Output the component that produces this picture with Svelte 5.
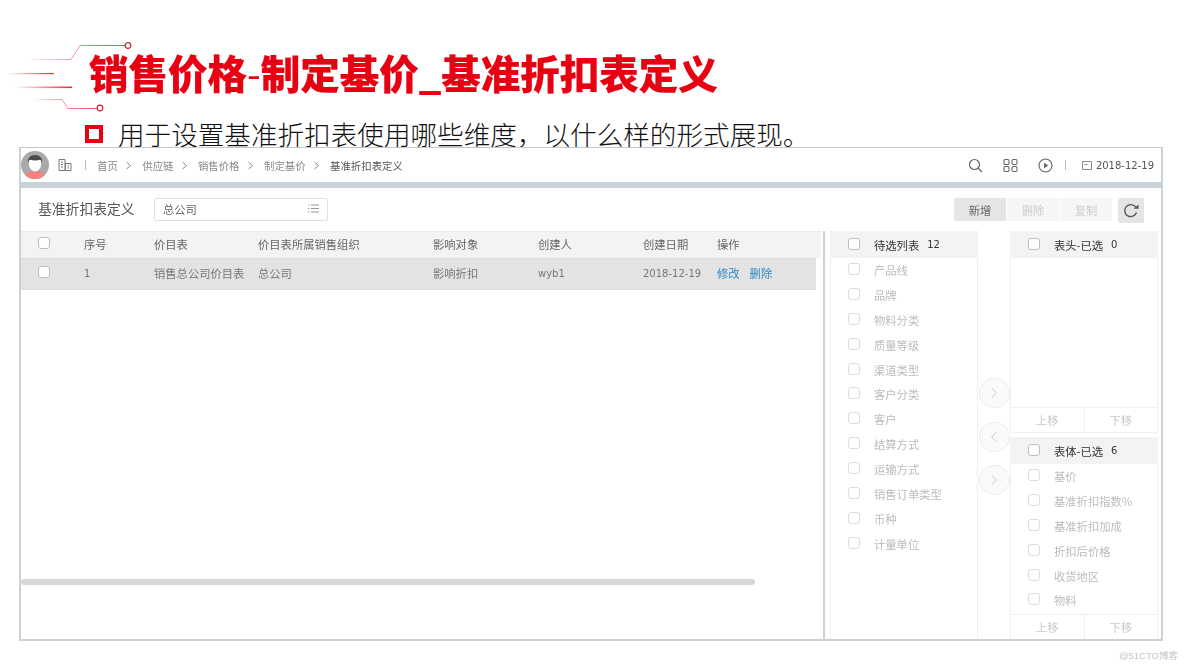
<script>
  const crumbs = ['首页', '供应链', '销售价格', '制定基价', '基准折扣表定义'];
  const candidates = ['产品线', '品牌', '物料分类', '质量等级', '渠道类型', '客户分类', '客户', '结算方式', '运输方式', '销售订单类型', '币种', '计量单位'];
  const bodyItems = ['基价', '基准折扣指数%', '基准折扣加成', '折扣后价格', '收货地区', '物料'];
  const cols = ['序号', '价目表', '价目表所属销售组织', '影响对象', '创建人', '创建日期', '操作'];
  const subtitle = '用于设置基准折扣表使用哪些维度\uFF0C以什么样的形式展现。';
</script>

<div class="slide">
  <svg class="deco" width="140" height="80" viewBox="0 0 140 80" aria-hidden="true">
    <defs>
      <linearGradient id="fade" x1="0" x2="1" y1="0" y2="0">
        <stop offset="0" stop-color="#e60012" stop-opacity="0" />
        <stop offset="1" stop-color="#e60012" stop-opacity="0.85" />
      </linearGradient>
      <linearGradient id="fadeA" gradientUnits="userSpaceOnUse" x1="30" x2="125" y1="0" y2="0">
        <stop offset="0" stop-color="#e60012" stop-opacity="0.05" />
        <stop offset="1" stop-color="#d9364a" stop-opacity="0.9" />
      </linearGradient>
      <linearGradient id="fadeB" gradientUnits="userSpaceOnUse" x1="35" x2="97" y1="0" y2="0">
        <stop offset="0" stop-color="#e60012" stop-opacity="0.05" />
        <stop offset="1" stop-color="#d9364a" stop-opacity="0.9" />
      </linearGradient>
    </defs>
    <path d="M30 19.500H71L80 5.500H125" fill="none" stroke="url(#fadeA)" stroke-width="1" />
    <circle cx="128" cy="5.500" r="2.800" fill="#fff" stroke="#d9213a" stroke-width="1.200" />
    <rect x="8" y="33" width="46" height="1.200" fill="url(#fade)" />
    <rect x="15" y="46.500" width="57" height="1.600" fill="url(#fade)" />
    <path d="M36 59.500H62L68 68.500H97" fill="none" stroke="url(#fadeB)" stroke-width="1" />
    <circle cx="100" cy="68" r="2.800" fill="#fff" stroke="#d9213a" stroke-width="1.200" />
  </svg>

  <header class="head">
    <h1>销售价格<span class="dash">-</span>制定基价_基准折扣表定义</h1>
    <p class="sub"><i class="bullet"></i><span>{subtitle}</span></p>
  </header>

  <main class="frame">
    <div class="topbar">
      <div class="avatar">
        <svg width="28" height="28" viewBox="0 0 28 28" aria-hidden="true">
          <circle cx="14" cy="14" r="14" fill="#a9a9ab" />
          <path d="M4.500 24.500c1.500-4 5-5 9.500-5s8 1 9.500 5a14 14 0 0 1-19 0Z" fill="#f2837a" />
          <path d="M7.500 11c0-4 3-6 6.500-6s6.500 2 6.500 6c0 5.500-3 9.500-6.500 9.500S7.500 16.500 7.500 11Z" fill="#fff" />
          <path d="M7 12.500C6 7 9.500 4 14 4s8 3 7 8.500c-.5-2-1-3-2-3.700-3 .9-7 .9-10 0-1 .7-1.500 1.700-2 3.700Z" fill="#4a4a4a" />
        </svg>
      </div>
      <svg class="org" width="14" height="14" viewBox="0 0 14 14" aria-hidden="true">
        <path d="M1 1.500h6v11H1zM7.500 5.500h5.500v7H7.500zM3 4h2M3 6.500h2M3 9h2M9.500 8h1.500M9.500 10h1.500" fill="none" stroke="#777" stroke-width="1" />
      </svg>
      <span class="vsep first"></span>
      <nav class="crumbs">
        {#each crumbs as c, i}
          {#if i > 0}
            <svg class="chev" width="7" height="9" viewBox="0 0 7 9" aria-hidden="true"><path d="M1.500 1 5.500 4.500 1.500 8" fill="none" stroke="#8a8a8a" stroke-width="1" /></svg>
          {/if}
          <span class:current={i === crumbs.length - 1}>{c}</span>
        {/each}
      </nav>
      <div class="tools">
        <svg width="15" height="15" viewBox="0 0 15 15" aria-hidden="true"><circle cx="6.500" cy="6.500" r="5" fill="none" stroke="#666" stroke-width="1.200" /><path d="m10 10 4 4" stroke="#666" stroke-width="1.200" /></svg>
        <svg width="15" height="15" viewBox="0 0 15 15" aria-hidden="true"><g fill="none" stroke="#666" stroke-width="1.100"><rect x="1" y="1.500" width="5" height="5" rx="1.200" /><rect x="9" y="1.500" width="5" height="5" rx="1.200" /><rect x="1" y="8.500" width="5" height="5" rx="1.200" /><rect x="9" y="8.500" width="5" height="5" rx="1.200" /></g></svg>
        <svg width="15" height="15" viewBox="0 0 15 15" aria-hidden="true"><circle cx="7.500" cy="7.500" r="6.500" fill="none" stroke="#666" stroke-width="1.100" /><path d="M6 4.800 10.200 7.500 6 10.200Z" fill="#666" /></svg>
        <span class="vsep tool-sep"></span>
        <div class="date">
          <svg width="10" height="10" viewBox="0 0 10 10" aria-hidden="true"><path d="M.5 1.500h9v8h-9zM2.500 4.500h3" fill="none" stroke="#888" stroke-width="1" /></svg>
          <span>2018-12-19</span>
        </div>
      </div>
    </div>
    <div class="band"></div>

    <div class="content">
      <div class="toolbar">
        <span class="page-title">基准折扣表定义</span>
        <div class="select">
          <span>总公司</span>
          <svg width="11" height="9" viewBox="0 0 11 9" aria-hidden="true"><path d="M0 1h1.500M3 1h8M0 4.500h1.500M3 4.500h8M0 8h1.500M3 8h8" stroke="#999" stroke-width="1" /></svg>
        </div>
        <div class="btns">
          <button class="btn primary">新增</button>
          <button class="btn">删除</button>
          <button class="btn">复制</button>
          <button class="refresh" aria-label="刷新">
            <svg width="17" height="15" viewBox="0 0 17 15" aria-hidden="true"><path d="M13.500 9.500A6 6 0 1 1 12.600 4" fill="none" stroke="#555" stroke-width="1.400" /><path d="M10.500 5.800h5V1.500Z" fill="#555" /></svg>
          </button>
        </div>
      </div>

      <div class="body">
        <section class="left">
          <div class="row thead">
            <span class="check"></span>
            {#each cols as c}<span>{c}</span>{/each}
          </div>
          <div class="row tbody">
            <span class="check"></span>
            <span class="num">1</span>
            <span>销售总公司价目表</span>
            <span>总公司</span>
            <span>影响折扣</span>
            <span class="num">wyb1</span>
            <span class="num">2018-12-19</span>
            <span class="actions"><a href="#edit">修改</a><a href="#del">删除</a></span>
          </div>
          <div class="scroll-wrap"><div class="scrollbar"></div></div>
        </section>

        <section class="right">
          <div class="panel cand">
            <div class="phead"><span class="check"></span><b>待选列表</b><em>12</em></div>
            {#each candidates as c}
              <div class="item"><span class="check"></span><span>{c}</span></div>
            {/each}
          </div>
          <div class="arrows">
            <span class="arrow"><svg width="8" height="12" viewBox="0 0 8 12" aria-hidden="true"><path d="m1.500 1 5 5-5 5" fill="none" stroke="#ccc" stroke-width="1" /></svg></span>
            <span class="arrow"><svg width="8" height="12" viewBox="0 0 8 12" aria-hidden="true"><path d="m6.500 1-5 5 5 5" fill="none" stroke="#ccc" stroke-width="1" /></svg></span>
            <span class="arrow"><svg width="8" height="12" viewBox="0 0 8 12" aria-hidden="true"><path d="m1.500 1 5 5-5 5" fill="none" stroke="#ccc" stroke-width="1" /></svg></span>
          </div>
          <div class="stack">
            <div class="panel top">
              <div class="phead"><span class="check"></span><b>表头-已选</b><em>0</em></div>
              <div class="grow"></div>
              <div class="moves"><span>上移</span><span>下移</span></div>
            </div>
            <div class="panel bottom">
              <div class="phead"><span class="check"></span><b>表体-已选</b><em>6</em></div>
              {#each bodyItems as c}
                <div class="item"><span class="check"></span><span>{c}</span></div>
              {/each}
              <div class="grow"></div>
              <div class="moves"><span>上移</span><span>下移</span></div>
            </div>
          </div>
        </section>
      </div>
    </div>
  </main>
  <div class="mark">@51CTO博客</div>
</div>

<style>
  :global(body) { margin: 0; background: #fff; }
  * { box-sizing: border-box; }
  .slide {
    position: relative;
    width: 1184px;
    height: 666px;
    overflow: hidden;
    background: #fff;
    font-family: "Noto Sans CJK SC", "Liberation Sans", sans-serif;
    font-size: 11.3px;
    color: #666;
    padding-left: 19px;
  }
  .deco { position: absolute; left: 0; top: 40px; filter: blur(.3px); }
  .head { height: 147px; padding: 48px 0 0 70px; }
  h1 {
    margin: 0;
    font-size: 39.500px;
    line-height: 48px;
    font-weight: 900;
    color: #e60012;
    -webkit-text-stroke: .2px #e60012;
    white-space: nowrap;
    filter: blur(.3px);
  }
  .dash { font-weight: 400; -webkit-text-stroke: 0; }
  .sub {
    display: flex;
    align-items: center;
    gap: 15px;
    margin: 25px 0 0 -4px;
    font-size: 26.600px;
    line-height: 26px;
    color: #111;
    font-weight: 300;
    white-space: nowrap;
  }
  .bullet { width: 18px; height: 18px; border: 4px solid #e60012; flex: none; }

  .frame {
    width: 1144px;
    height: 494px;
    border-top: 1px solid #c4c8cc;
    border-left: 2px solid #ccd1d8;
    border-right: 2px solid #ccd1d8;
    border-bottom: 2px solid #ccd1d8;
    display: flex;
    flex-direction: column;
    filter: blur(.45px);
  }
  .topbar { height: 34px; display: flex; align-items: center; padding-right: 7px; flex: none; }
  .avatar { width: 28px; height: 28px; flex: none; display: flex; }
  .org { margin-left: 9px; flex: none; }
  .vsep { width: 1px; height: 10px; background: #bbb; flex: none; }
  .vsep.first { margin-left: 13px; }
  .vsep.tool-sep { margin-left: -8px; }
  .crumbs { display: flex; align-items: center; margin-left: 11px; font-size: 10.400px; color: #888; }
  .crumbs .chev { margin: 0 10px 0 7.500px; }
  .crumbs .current { color: #555; }
  .tools { margin-left: auto; display: flex; align-items: center; gap: 20px; }
  .date { display: flex; align-items: center; gap: 4px; margin-left: -4px; font-family: "DejaVu Sans", sans-serif; font-size: 10px; color: #555; }
  .band { height: 6px; background: #c9d1d8; flex: none; }

  .content { flex: 1; display: flex; flex-direction: column; min-height: 0; }
  .toolbar { height: 43px; display: flex; align-items: flex-start; padding: 10px 17px 0 17px; flex: none; }
  .page-title { font-size: 13.800px; line-height: 20px; color: #555; width: 116px; flex: none; }
  .select {
    width: 174px; height: 23px; border: 1px solid #e0e0e0; border-radius: 2px;
    display: flex; align-items: center; justify-content: space-between; padding: 0 8px 2px; color: #666;
  }
  .btns { margin-left: auto; display: flex; gap: 1px; align-items: flex-start; }
  .btn {
    width: 52px; height: 23px; border: 0; padding: 0; background: #f6f6f6; color: #ccc;
    font: inherit; border-radius: 0;
  }
  .btn.primary { background: #e5e5e5; color: #666; border-radius: 2px 0 0 2px; }
  .refresh {
    width: 26px; height: 25px; border: 0; margin-left: 5px; background: #e5e5e5; border-radius: 2px;
    display: flex; align-items: center; justify-content: center; padding: 0;
  }

  .body { flex: 1; display: flex; min-height: 0; }
  .left { width: 804px; flex: none; border-right: 2px solid #ccd1d8; display: flex; flex-direction: column; }
  .row {
    display: grid;
    grid-template-columns: 46px 70px 104px 175px 105px 105px 74px 1fr;
    align-items: center;
    padding-left: 17px;
    flex: none;
  }
  .row span { padding-bottom: 2px; }
  .thead { height: 27px; width: 800px; background: #f3f3f3; border-top: 1px solid #ededed; color: #666; }
  .tbody { height: 32px; width: 795px; background: #e3e3e3; border-top: 1px solid #dcdcdc; border-bottom: 1px solid #dcdcdc; color: #777; }
  .num { font-family: "DejaVu Sans", sans-serif; font-size: 10px; }
  .actions { display: flex; gap: 10px; }
  .actions a { color: #2b88c8; text-decoration: none; }
  .check {
    display: block; width: 12px; height: 12px; border: 1px solid #bdbdbd; border-radius: 3px; background: #fff; flex: none;
  }
  .row .check { padding: 0; margin-top: -4px; }
  .scroll-wrap { flex: 1; display: flex; align-items: flex-end; padding-bottom: 54px; }
  .scrollbar { width: 734px; height: 6px; background: #d6d6d6; border-radius: 3px; }

  .right { flex: 1; display: flex; padding-left: 5px; min-width: 0; min-height: 0; }
  .panel { display: flex; flex-direction: column; border-right: 1px solid #f0f0f0; }
  .cand { width: 148px; flex: none; border-left: 1px solid #f0f0f0; }
  .phead { height: 27px; background: #f3f3f3; display: flex; align-items: center; flex: none; color: #333; padding-left: 17px; }
  .phead .check { margin-right: 14px; margin-top: -2px; }
  .phead b { font-weight: 400; }
  .phead em { font-style: normal; margin-left: 8px; font-family: "DejaVu Sans", sans-serif; font-size: 10px; }
  .item { height: 24.900px; display: flex; align-items: center; padding-left: 17px; color: #bcbcbc; flex: none; }
  .item .check { margin-right: 14px; margin-top: -3px; border-color: #dcdcdc; }
  .item span:last-child { padding-bottom: 1px; }
  .arrows {
    width: 32px; flex: none; display: flex; flex-direction: column; align-items: center; gap: 13.500px; padding-top: 147px; position: relative; z-index: 1;
  }
  .arrow {
    width: 31px; height: 30px; border-radius: 50%; background: #fafafa; border: 1px solid #ececec;
    display: flex; align-items: center; justify-content: center; flex: none;
  }
  .stack { width: 148px; flex: none; display: flex; flex-direction: column; gap: 4px; }
  .panel.top { height: 202px; flex: none; border-left: 1px solid #f0f0f0; border-bottom: 1px solid #f0f0f0; }
  .panel.bottom { flex: 1; min-height: 0; border-left: 1px solid #f0f0f0; }
  .grow { flex: 1; }
  .moves { height: 25px; display: flex; border-top: 1px solid #f0f0f0; flex: none; color: #c8c8c8; }
  .moves span { flex: 1; display: flex; align-items: center; justify-content: center; }
  .moves span + span { border-left: 1px solid #f0f0f0; }
  .mark { position: absolute; right: 6px; top: 648px; font-size: 9.500px; color: #c4c4c4; filter: blur(.3px); font-family: "Liberation Sans", "Noto Sans CJK SC", sans-serif; }
</style>
